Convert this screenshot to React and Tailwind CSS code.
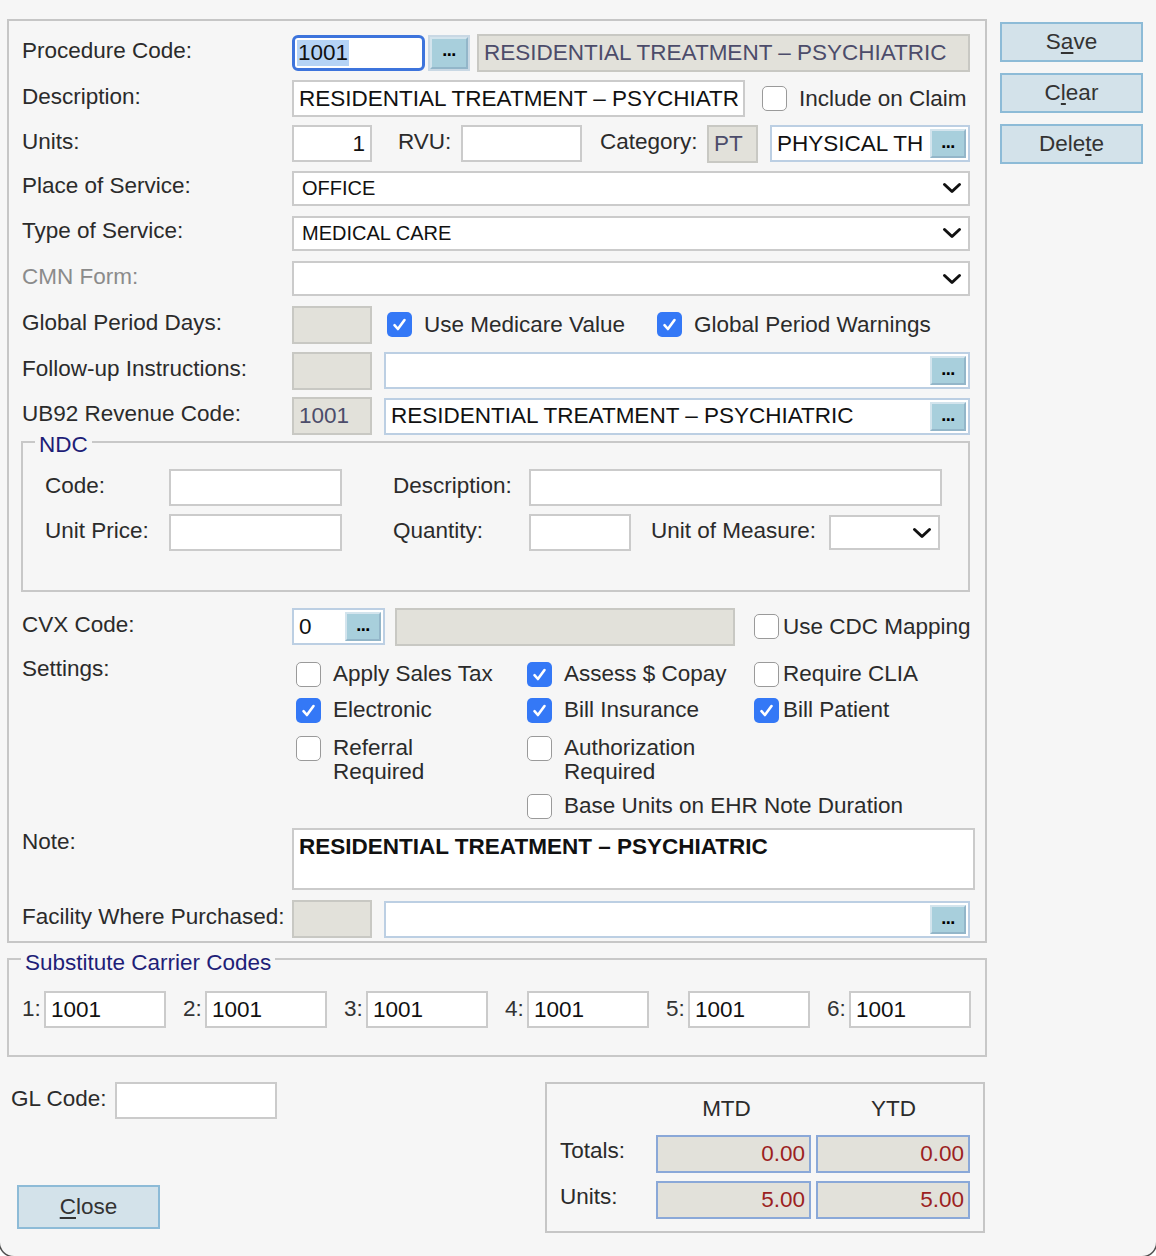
const Dots = ({ className = 'w-[36px] h-[29px]' }) => (
  <div className={`${className} shrink-0 bg-[#a8cfdc] border-2 border-[#d3e4ed] border-r-[#93b6c9] border-b-[#93b6c9] flex items-start justify-center pt-[1px]`}>
    <span className="text-[18px] leading-[20px] font-bold text-black tracking-[-0.5px]">...</span>
  </div>
);

const Tick = () => (
  <svg width="17" height="17" viewBox="0 0 17 17">
    <path d="M3.5 9.2l3.4 3.8 6.6-9" fill="none" stroke="white" strokeWidth="2.6" strokeLinecap="round" strokeLinejoin="round" />
  </svg>
);

const Chevron = () => (
  <svg width="20" height="12" viewBox="0 0 20 12">
    <path d="M2.5 2.5l7.5 7 7.5-7" fill="none" stroke="#111" strokeWidth="3" strokeLinecap="round" strokeLinejoin="round" />
  </svg>
);

const Check = ({ on }) =>
  on ? (
    <div className="w-[25px] h-[25px] shrink-0 rounded-[5px] bg-[#3478f6] flex items-center justify-center">
      <Tick />
    </div>
  ) : (
    <div className="w-[25px] h-[25px] shrink-0 rounded-[5px] border-[1.5px] border-[#9a9a9a] bg-white" />
  );

const Box = ({ className = '', children }) => (
  <div className={`h-[37px] shrink-0 border-2 border-[#cbcbcb] bg-white flex items-center px-[5px] text-[#111] whitespace-nowrap overflow-hidden ${className}`}>
    {children}
  </div>
);

const Off = ({ className = '', children }) => (
  <div className={`h-[38px] shrink-0 border-2 border-[#c8c8c3] bg-[#e2e1da] flex items-center px-[5px] text-[#4c4c6a] whitespace-nowrap overflow-hidden ${className}`}>
    {children}
  </div>
);

const Lookup = ({ className = '', children }) => (
  <div className={`h-[37px] shrink-0 border-2 border-[#bccfe3] bg-white flex items-center pl-[5px] pr-[2px] text-[#111] ${className}`}>
    <div className="flex-1 min-w-0 overflow-hidden whitespace-nowrap">{children}</div>
    <Dots />
  </div>
);

const Select = ({ className = 'w-[678px]', children }) => (
  <div className={`h-[35px] shrink-0 border-2 border-[#cbcbcb] bg-white flex items-center justify-between pl-[8px] pr-[6px] text-[20px] text-[#111] ${className}`}>
    <span>{children}</span>
    <Chevron />
  </div>
);

const Row = ({ label, h, muted, children }) => (
  <div className={`flex items-center ${h}`}>
    <div className={`w-[270px] shrink-0 pb-[4px] ${muted ? 'text-[#8b8b8b]' : ''}`}>{label}</div>
    {children}
  </div>
);

const Opt = ({ on, tight, children }) => (
  <div className={`flex items-center ${tight ? 'gap-[4px]' : 'gap-[12px]'}`}>
    <Check on={on} />
    <span>{children}</span>
  </div>
);

const Btn = ({ className = '', children }) => (
  <div className={`w-[143px] h-[40px] border-2 border-[#8dbbd7] bg-[#d3e2ea] flex items-center justify-center text-[#333] ${className}`}>
    {children}
  </div>
);

const U = ({ children }) => <span className="underline underline-offset-[3px] decoration-[1.5px]">{children}</span>;

export default function App() {
  return (
    <div className="w-[1156px] h-[1256px] bg-white overflow-hidden font-['Liberation_Sans',Arial,sans-serif] text-[22.5px] leading-[26px] text-[#2b2b2b]">
      <div className="h-full bg-[#f6f6f6] rounded-b-[14px] shadow-[0_0_0_1.5px_#505050] pl-[7px] pt-[19px]">
        <div className="flex">
          {/* main panel */}
          <div className="w-[980px] h-[924px] shrink-0 border-2 border-[#c6c6c6] pl-[13px] pt-[9px]">
            <Row label="Procedure Code:" h="h-[46px]">
              <div className="w-[133px] h-[36px] border-[3px] border-[#3d74dc] rounded-[6px] bg-white flex items-center px-[2px] text-[#111]">
                <span className="bg-[#b5d3f5] px-[1px]">1001</span>
              </div>
              <div className="ml-[3px] w-[42px] h-[36px] border-2 border-[#c9d8e4] flex">
                <Dots className="w-full h-full" />
              </div>
              <Off className="ml-[7px] w-[493px] h-[36px]">RESIDENTIAL TREATMENT – PSYCHIATRIC</Off>
            </Row>
            <Row label="Description:" h="h-[45px]">
              <Box className="w-[453px]">RESIDENTIAL TREATMENT – PSYCHIATR</Box>
              <div className="ml-[17px]">
                <Opt>Include on Claim</Opt>
              </div>
            </Row>
            <Row label="Units:" h="h-[45px]">
              <Box className="w-[80px] justify-end">1</Box>
              <span className="ml-[26px] w-[63px] pb-[4px]">RVU:</span>
              <Box className="w-[121px]" />
              <span className="ml-[18px] w-[107px] pb-[4px] whitespace-nowrap">Category:</span>
              <Off className="w-[51px]">PT</Off>
              <Lookup className="ml-[12px] w-[200px]">PHYSICAL TH</Lookup>
            </Row>
            <Row label="Place of Service:" h="h-[44px]">
              <Select>OFFICE</Select>
            </Row>
            <Row label="Type of Service:" h="h-[46px]">
              <Select>MEDICAL CARE</Select>
            </Row>
            <Row label="CMN Form:" h="h-[45px]" muted>
              <Select />
            </Row>
            <Row label="Global Period Days:" h="h-[47px]">
              <Off className="w-[80px]" />
              <div className="ml-[15px] w-[270px]">
                <Opt on>Use Medicare Value</Opt>
              </div>
              <Opt on>Global Period Warnings</Opt>
            </Row>
            <Row label="Follow-up Instructions:" h="h-[45px]">
              <Off className="w-[80px]" />
              <Lookup className="ml-[12px] w-[586px]" />
            </Row>
            <Row label="UB92 Revenue Code:" h="h-[46px]">
              <Off className="w-[80px]">1001</Off>
              <Lookup className="ml-[12px] w-[586px]">RESIDENTIAL TREATMENT – PSYCHIATRIC</Lookup>
            </Row>

            {/* NDC */}
            <div className="relative -ml-[1px] mt-[2px] w-[949px] h-[151px] border-2 border-[#c8c8c8] pl-[22px] pt-[26px]">
              <div className="absolute left-[12px] -top-[11px] px-[4px] bg-[#f6f6f6] text-[#1e1e78]">NDC</div>
              <div className="flex items-center h-[37px]">
                <span className="w-[124px] pb-[4px]">Code:</span>
                <Box className="w-[173px]" />
                <span className="ml-[51px] w-[136px] pb-[4px]">Description:</span>
                <Box className="w-[413px]" />
              </div>
              <div className="flex items-center h-[37px] mt-[8px]">
                <span className="w-[124px] pb-[4px]">Unit Price:</span>
                <Box className="w-[173px]" />
                <span className="ml-[51px] w-[136px] pb-[4px]">Quantity:</span>
                <Box className="w-[102px]" />
                <span className="ml-[20px] w-[178px] pb-[4px] whitespace-nowrap">Unit of Measure:</span>
                <Select className="w-[111px]" />
              </div>
            </div>

            <div className="mt-[11px]">
              <Row label="CVX Code:" h="h-[47px]">
                <Lookup className="w-[93px]">0</Lookup>
                <Off className="ml-[10px] w-[340px] h-[37px]" />
                <div className="ml-[19px]">
                  <Opt tight>Use CDC Mapping</Opt>
                </div>
              </Row>
            </div>

            {/* settings */}
            <div className="flex mt-[6px]">
              <div className="w-[274px] shrink-0">Settings:</div>
              <div className="grid grid-cols-[231px_227px_1fr]">
                <div className="h-[36px] flex items-center"><Opt>Apply Sales Tax</Opt></div>
                <div className="h-[36px] flex items-center"><Opt on>Assess $ Copay</Opt></div>
                <div className="h-[36px] flex items-center"><Opt tight>Require CLIA</Opt></div>
                <div className="h-[36px] flex items-center"><Opt on>Electronic</Opt></div>
                <div className="h-[36px] flex items-center"><Opt on>Bill Insurance</Opt></div>
                <div className="h-[36px] flex items-center"><Opt on tight>Bill Patient</Opt></div>
                <div className="h-[60px] pt-[8px] flex items-start gap-[12px] leading-[24px]">
                  <Check />
                  <span>Referral<br />Required</span>
                </div>
                <div className="h-[60px] pt-[8px] flex items-start gap-[12px] leading-[24px]">
                  <Check />
                  <span>Authorization<br />Required</span>
                </div>
                <div />
                <div />
                <div className="h-[36px] flex items-center col-span-2"><Opt>Base Units on EHR Note Duration</Opt></div>
              </div>
            </div>

            <div className="flex mt-[4px]">
              <div className="w-[270px] shrink-0 pt-[1px]">Note:</div>
              <div className="w-[683px] h-[62px] border-2 border-[#cbcbcb] bg-white px-[5px] pt-[4px] font-bold text-[#111]">
                RESIDENTIAL TREATMENT – PSYCHIATRIC
              </div>
            </div>

            <div className="mt-[10px]">
              <Row label="Facility Where Purchased:" h="h-[38px]">
                <Off className="w-[80px]" />
                <Lookup className="ml-[12px] w-[586px]" />
              </Row>
            </div>
          </div>

          {/* action buttons */}
          <div className="ml-[13px] pt-[3px] flex flex-col gap-[11px]">
            <Btn>S<U>a</U>ve</Btn>
            <Btn>C<U>l</U>ear</Btn>
            <Btn>Dele<U>t</U>e</Btn>
          </div>
        </div>

        {/* substitute carrier codes */}
        <div className="relative mt-[15px] w-[980px] h-[99px] border-2 border-[#c8c8c8] pl-[13px] pt-[31px]">
          <div className="absolute left-[12px] -top-[10px] px-[4px] bg-[#f6f6f6] text-[#1e1e78]">Substitute Carrier Codes</div>
          <div className="flex items-center gap-[17px]">
            {[1, 2, 3, 4, 5, 6].map((n) => (
              <div key={n} className="flex items-center">
                <span className="w-[22px] pb-[2px] text-[#333]">{n}:</span>
                <Box className="w-[122px]">1001</Box>
              </div>
            ))}
          </div>
        </div>

        {/* bottom */}
        <div className="flex mt-[25px]">
          <div className="w-[538px] shrink-0">
            <div className="flex items-center ml-[4px]">
              <span className="w-[104px] pb-[4px]">GL Code:</span>
              <Box className="w-[162px]" />
            </div>
            <Btn className="ml-[10px] mt-[66px] h-[44px]"><U>C</U>lose</Btn>
          </div>
          <div className="w-[440px] h-[151px] border-2 border-[#c6c6c6] pl-[13px] pt-[10px]">
            <div className="flex h-[30px] items-center">
              <span className="w-[96px]" />
              <span className="w-[155px] text-center pr-[14px]">MTD</span>
              <span className="w-[159px] text-center pl-[6px]">YTD</span>
            </div>
            {[['Totals:', '0.00'], ['Units:', '5.00']].map(([l, v], i) => (
              <div key={l} className={`flex items-center h-[38px] ${i ? 'mt-[8px]' : 'mt-[11px]'}`}>
                <span className="w-[96px] pb-[6px]">{l}</span>
                <div className="w-[155px] h-[38px] border-2 border-[#8aa8d8] bg-[#e2e1da] flex items-center justify-end pr-[4px] text-[#9c1f1f]">{v}</div>
                <div className="ml-[5px] w-[154px] h-[38px] border-2 border-[#8aa8d8] bg-[#e2e1da] flex items-center justify-end pr-[4px] text-[#9c1f1f]">{v}</div>
              </div>
            ))}
          </div>
        </div>
      </div>
    </div>
  );
}
